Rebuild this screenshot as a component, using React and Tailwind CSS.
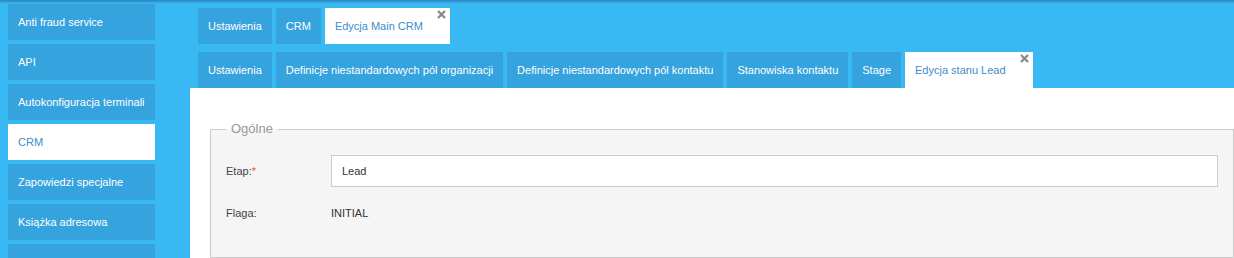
import React from "react";

const sideItems = [
  "Anti fraud service",
  "API",
  "Autokonfiguracja terminali",
  "CRM",
  "Zapowiedzi specjalne",
  "Książka adresowa",
  "",
];

function CloseX() {
  return (
    <svg
      className="absolute top-[2px] right-[4px]"
      width="9"
      height="9"
      viewBox="0 0 9 9"
    >
      <path d="M1 1 L8 8 M8 1 L1 8" stroke="#8a8a8a" strokeWidth="2.4" strokeLinecap="butt" />
    </svg>
  );
}

function Tab({ label, active }) {
  if (active) {
    return (
      <div className="relative h-[36px] flex items-center pl-[10px] pr-[27px] bg-white text-[#3d8ccb]">
        {label}
        <CloseX />
      </div>
    );
  }
  return (
    <div className="h-[36px] flex items-center px-[10px] bg-[#35a3dd] text-white">
      {label}
    </div>
  );
}

export default function App() {
  return (
    <div
      className="w-[1234px] h-[258px] overflow-hidden bg-[#38b9f4] flex flex-col text-[11px]"
      style={{ fontFamily: '"Liberation Sans", Arial, sans-serif' }}
    >
      <div className="h-[3px] shrink-0 bg-gradient-to-b from-[#2a86b8] to-[#36ace6]" />
      <div className="flex flex-1 min-h-0">
        <div className="w-[190px] shrink-0 pl-[8px] pr-[35px] pt-[1px] flex flex-col gap-[4px]">
          {sideItems.map((s, i) =>
            s === "CRM" ? (
              <div key={i} className="h-[36px] shrink-0 flex items-center pl-[10px] bg-white text-[#3d8ccb]">
                {s}
              </div>
            ) : (
              <div key={i} className="h-[36px] shrink-0 flex items-center pl-[10px] bg-[#35a3dd] text-white">
                {s}
              </div>
            )
          )}
        </div>
        <div className="flex-1 flex flex-col min-w-0">
          <div className="flex gap-[4px] pl-[8px] mt-[5px]">
            <Tab label="Ustawienia" />
            <Tab label="CRM" />
            <Tab label="Edycja Main CRM" active />
          </div>
          <div className="flex gap-[4px] pl-[8px] mt-[8px]">
            <Tab label="Ustawienia" />
            <Tab label="Definicje niestandardowych pól organizacji" />
            <Tab label="Definicje niestandardowych pól kontaktu" />
            <Tab label="Stanowiska kontaktu" />
            <Tab label="Stage" />
            <Tab label="Edycja stanu Lead" active />
          </div>
          <div className="flex-1 bg-white pl-[20px]">
            <fieldset className="mt-[33px] border border-[#cccccc] bg-[#f5f5f5] pl-[15px] pr-[15px] pt-[18px] pb-[28px]">
              <legend className="px-[5px] text-[13px] leading-[16px] text-[#999999]">Ogólne</legend>
              <div className="flex flex-col gap-[10px]">
                <div className="flex items-center h-[32px]">
                  <div className="w-[105px] shrink-0 text-[#444444]">
                    Etap:<span className="text-[#f0562a]">*</span>
                  </div>
                  <input
                    readOnly
                    value="Lead"
                    className="flex-1 h-[32px] border border-[#cccccc] bg-white pl-[10px] text-[11px] text-[#333333] outline-none"
                  />
                </div>
                <div className="flex items-center h-[32px]">
                  <div className="w-[105px] shrink-0 text-[#444444]">Flaga:</div>
                  <div className="text-[#333333]">INITIAL</div>
                </div>
              </div>
            </fieldset>
          </div>
        </div>
      </div>
    </div>
  );
}
